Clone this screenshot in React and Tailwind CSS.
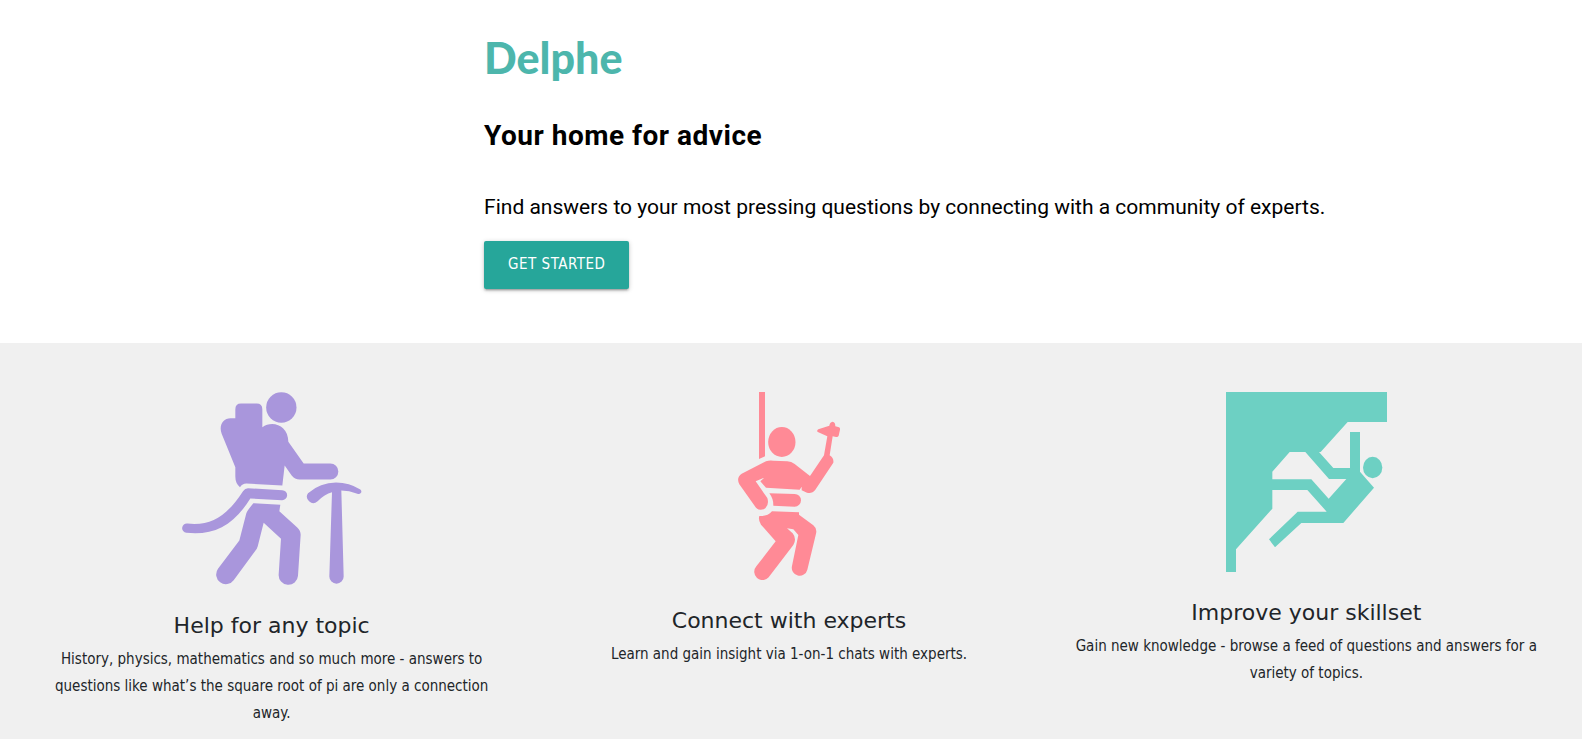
function HikerIcon() {
  return (
    <svg viewBox="35 36 540 576" className="h-[193px] w-45" fill="#a996dc" aria-hidden="true">
      <circle cx="333" cy="81" r="45.500" />
      <path d="M195 113V86Q195 69 212 69H259Q276 69 276 86V140C305 118 354 133 354 184L400 249H480A24 24 0 0 1 480 297H388Q373 297 364 285L343 255L336 315L228 309Q216 309 209 320Q195 309 195 288V260L154 160C145 136 157 113 181 113Z" />
      <path d="M233 323L336 329A15 15 0 0 1 335 359L240 354C190 435 130 466 48 457A14 14 0 0 1 51 429C125 437 170 405 218 332Q224 323 233 323Z" />
      <path d="M249 368L330 373L327 392L380 440Q391 450 391 463L383 586A28.500 28.500 0 0 1 325 582L332 475L280 427L262 498Q260 505 255 511L190 599A28.500 28.500 0 0 1 143 565L207 480L228 398Q230 391 249 368Z" />
      <path d="M485 335Q463 340 441 363A19 19 0 0 1 413 338Q450 306 497 306Q537 306 570 327Q575 331 572 337Q568 342 561 340Q536 330 513 330L520 588A21 21 0 0 1 477 588Z" />
    </svg>
  );
}

function ClimberIcon() {
  return (
    <svg viewBox="24 36 306 564" className="h-47 w-[102px]" fill="#ff8a96" aria-hidden="true">
      <path d="M87 36H105V229L87 237Z" />
      <ellipse cx="155.500" cy="186" rx="41" ry="45" />
      <path d="M282 226L292 169L265 157Q258 153 265 148L298 137Q299 126 308 125Q316 126 316 139L327 142Q331 144 330 149L326 167Q324 172 318 171L308 169L299 226Q312 234 310 248L256 329Q246 342 231 338L215 331L215 320L209 329L108 323L91 304L103 293L77 304L112 354Q118 374 106 385Q90 395 78 383L28 313Q18 293 35 281L108 244Q118 240 130 242L172 244Q184 245 194 252L240 288Z" />
      <path d="M118 340L194 342A19 19 0 0 1 194 380L130 377Q131 357 118 340Z" />
      <path d="M126 394L207 397L207 404L250 436Q262 446 258 461L232 569A23.500 23.500 0 0 1 186 558L205 465L190 448L171 445L188 460Q201 476 190 495L116 592A24 24 0 0 1 79 559L137 484L93 434Q84 420 88 408Q112 410 126 394Z" />
    </svg>
  );
}

function CliffIcon() {
  return (
    <svg viewBox="33 36 483 540" className="h-45 w-[161px]" fill="#6dd0c3" aria-hidden="true">
      <path fillRule="evenodd" d="M33 36H516V126H398L317 216H312L355 264H405V156H435V275L477 323L385 429H259L180 502L162 478L248 395H335L277 330H172V386L63 508V576H33ZM172 298H289L341 356L394 297H342L271 216H224L172 275Z" />
      <ellipse cx="473" cy="262.500" rx="29" ry="32" />
    </svg>
  );
}

const features = [
  {
    Icon: HikerIcon,
    title: "Help for any topic",
    text: "History, physics, mathematics and so much more - answers to questions like what’s the square root of pi are only a connection away.",
  },
  {
    Icon: ClimberIcon,
    title: "Connect with experts",
    text: "Learn and gain insight via 1-on-1 chats with experts.",
  },
  {
    Icon: CliffIcon,
    title: "Improve your skillset",
    text: "Gain new knowledge - browse a feed of questions and answers for a variety of topics.",
  },
];

export default function App() {
  return (
    <div className="flex min-h-screen flex-col bg-white font-['DejaVu_Sans',sans-serif]">
      <header className="flex flex-col items-start pt-7 pr-4 pb-[54px] pl-[30.6%] font-['Roboto',sans-serif] text-black">
        <p className="font-['Lato',sans-serif] text-[43px] leading-[60px] font-black text-[#4db6ac]">Delphe</p>
        <h1 className="mt-7 text-[28px] leading-10 font-bold tracking-[0.5px]">Your home for advice</h1>
        <p className="mt-[35px] text-[21px] leading-8">
          Find answers to your most pressing questions by connecting with a community of experts.
        </p>
        <button
          type="button"
          className="mt-[18px] h-12 rounded-[2px] bg-[#26a69a] px-6 pb-0.5 font-['DejaVu_Sans_Condensed','DejaVu_Sans',sans-serif] text-[15px] tracking-[0.5px] text-white uppercase shadow-[0_2px_2px_0_rgba(0,0,0,0.14),0_3px_1px_-2px_rgba(0,0,0,0.12),0_1px_5px_0_rgba(0,0,0,0.2)]"
        >
          Get started
        </button>
      </header>
      <main className="grid flex-1 grid-cols-3 items-start bg-[#f0f0f0] pt-[49px] pr-[17px] pl-[13px] text-[#212529]">
        {features.map(({ Icon, title, text }) => (
          <section key={title} className="flex flex-col items-center px-6 text-center">
            <Icon />
            <h2 className="mt-[25px] text-[22px] leading-8">{title}</h2>
            <p className="mt-1 font-['DejaVu_Sans_Condensed','DejaVu_Sans',sans-serif] text-[15px] leading-[27px]">{text}</p>
          </section>
        ))}
      </main>
    </div>
  );
}
